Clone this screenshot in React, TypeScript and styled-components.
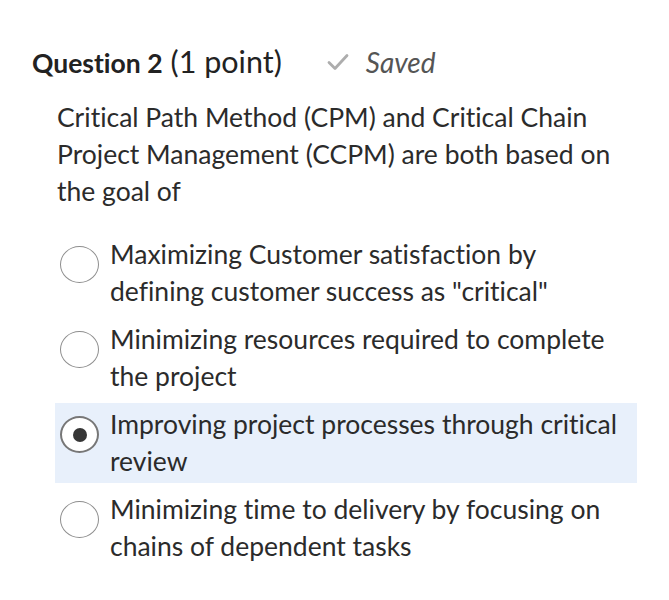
import React from "react";
import styled, { createGlobalStyle } from "styled-components";

const Global = createGlobalStyle`
  html, body { margin: 0; padding: 0; background: #fff; }
  body {
    font-family: Lato, "Open Sans", sans-serif;
    color: #2b2b2b;
    font-variant-ligatures: none;
  }
`;

const Page = styled.div`
  padding: 40px 32px 0 32px;
`;

const Header = styled.div`
  display: flex;
  align-items: baseline;
  line-height: 42px;
`;

const QTitle = styled.span`
  font-weight: 700;
  font-size: 26.5px;
  color: #222;
`;

const QPoints = styled.span`
  font-size: 30.5px;
  font-weight: 400;
  color: #222;
  margin-left: 8px;
`;

const SavedBox = styled.span`
  display: inline-flex;
  align-items: center;
  margin-left: 45px;
  gap: 17px;
  align-self: center;
`;

const SavedText = styled.span`
  font-style: italic;
  font-size: 28px;
  color: #555;
`;

const Body = styled.div`
  padding-left: 25px;
  margin-top: 15px;
`;

const Prompt = styled.p`
  margin: 0;
  font-size: 26.5px;
  line-height: 37px;
  color: #2b2b2b;
  max-width: 572px;
`;

const Options = styled.div`
  display: flex;
  flex-direction: column;
  gap: 5px;
  margin-top: 23px;
`;

const Option = styled.label<{ $selected?: boolean }>`
  display: flex;
  align-items: flex-start;
  gap: 11px;
  padding: 3px 5px 3px 5px;
  margin-left: -2px;
  width: 572px;
  background: ${(p) => (p.$selected ? "#e8f0fb" : "transparent")};
`;

const Radio = styled.span<{ $checked?: boolean }>`
  flex: none;
  box-sizing: border-box;
  width: 39px;
  height: 37px;
  margin-top: 10px;
  border-radius: 50%;
  border: ${(p) => (p.$checked ? "2px solid #777" : "1.6px solid #8e8e8e")};
  background: #fff;
  display: flex;
  align-items: center;
  justify-content: center;
  &::after {
    content: "";
    display: ${(p) => (p.$checked ? "block" : "none")};
    width: 14px;
    height: 14px;
    border-radius: 50%;
    background: #363636;
  }
`;

const OptionText = styled.span`
  font-size: 26.5px;
  line-height: 37px;
  color: #2b2b2b;
`;

const options = [
  'Maximizing Customer satisfaction by defining customer success as "critical"',
  "Minimizing resources required to complete the project",
  "Improving project processes through critical review",
  "Minimizing time to delivery by focusing on chains of dependent tasks",
];

const Check = () => (
  <svg width="22" height="18" viewBox="0 0 22 18">
    <path d="M2 9.5 L8 15.5 L20 2.5" fill="none" stroke="#adadad" strokeWidth="2.8" strokeLinecap="round" strokeLinejoin="round" />
  </svg>
);

export default function App() {
  return (
    <Page>
      <Global />
      <Header>
        <QTitle>Question 2</QTitle>
        <QPoints>(1 point)</QPoints>
        <SavedBox>
          <Check />
          <SavedText>Saved</SavedText>
        </SavedBox>
      </Header>
      <Body>
        <Prompt>
          Critical Path Method (CPM) and Critical Chain Project Management (CCPM) are both based on the goal of
        </Prompt>
        <Options>
          {options.map((o, i) => (
            <Option key={i} $selected={i === 2}>
              <Radio $checked={i === 2} />
              <OptionText>{o}</OptionText>
            </Option>
          ))}
        </Options>
      </Body>
    </Page>
  );
}
